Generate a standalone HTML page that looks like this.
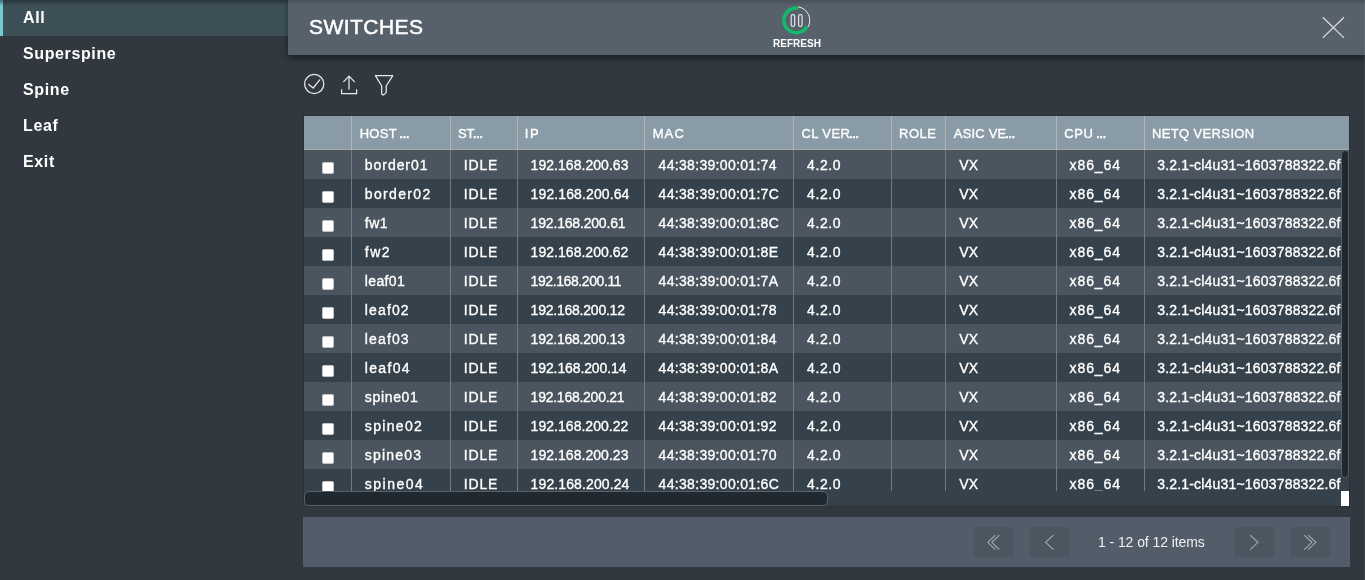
<!DOCTYPE html>
<html><head><meta charset="utf-8"><title>Switches</title>
<style>
*{box-sizing:border-box;margin:0;padding:0}
html,body{width:1365px;height:580px;overflow:hidden;background:#31383f;font-family:"Liberation Sans",sans-serif;color:#fff}
#side{position:absolute;left:0;top:0;width:288px;height:580px;background:#31383f}
#side .it{position:absolute;left:0;width:288px;height:36px;font-weight:bold;font-size:16px;line-height:35px;letter-spacing:.62px;padding-left:23px;white-space:nowrap}
#side .act{background:#3d5058;border-left:3px solid #72ccd3;padding-left:20px}
#topsh{position:absolute;left:0;top:0;width:288px;height:6px;background:linear-gradient(to bottom,rgba(20,26,32,.5),rgba(20,26,32,0));z-index:9}
#topsh2{position:absolute;left:288px;top:0;width:1077px;height:5px;background:linear-gradient(to bottom,rgba(20,26,32,.22),rgba(20,26,32,0));z-index:9}
#bar{position:absolute;left:288px;top:0;width:1077px;height:55px;background:#57616b;box-shadow:0 3px 6px rgba(0,0,0,.45)}
#barsh{display:none}
#redge{position:absolute;left:1364px;top:0;width:1px;height:580px;background:rgba(255,255,255,.06)}
#title{position:absolute;left:21px;top:15.2px;font-size:21px;line-height:24px;letter-spacing:.45px;white-space:nowrap}
#rf{position:absolute;left:0;top:0}
#rft{position:absolute;left:474px;top:37.5px;width:70px;text-align:center;font-size:10px;line-height:12px;letter-spacing:.05px;font-weight:bold;white-space:nowrap}
svg{position:absolute;overflow:visible}
#tbl{position:absolute;left:304px;top:116px;width:1045px;height:390px;background:#35424b;overflow:hidden;box-shadow:0 0 0 1px #2b3035}
#hd{position:absolute;left:0;top:0;width:1045px;height:34px;background:#899ba7;border-bottom:1px solid #a9abab}
.hc{position:absolute;top:0;height:34px;font-size:13px;line-height:35px;padding-left:7px;white-space:nowrap;border-left:1px solid #b5b2b0}
.r{position:absolute;left:0;width:1045px;height:29px}
.r.o{background:#4a555f}.r.e{background:#35424b}
.c{position:absolute;top:0;height:29px;font-size:14px;line-height:30px;padding-left:12.5px;white-space:nowrap;border-left:1px solid #717b82;overflow:hidden}
.el{font-size:14px;letter-spacing:-.6px;margin-left:-1.5px;-webkit-text-stroke:.6px #fff}
.h1{letter-spacing:0.308px;padding-left:7.64px}.h2{letter-spacing:-0.279px;padding-left:7.11px}.h3{letter-spacing:1.516px;padding-left:6.81px}.h4{letter-spacing:1.125px;padding-left:7.64px}.h5{letter-spacing:0.382px;padding-left:7.45px}.h6{letter-spacing:0.515px;padding-left:7.06px}.h7{letter-spacing:0.188px;padding-left:7.84px}.h8{letter-spacing:0.548px;padding-left:7.26px}.h9{letter-spacing:0.374px;padding-left:6.90px}.k1{letter-spacing:0.980px;padding-left:12.85px}.k2{letter-spacing:0.818px;padding-left:12.87px}.k3{letter-spacing:-0.022px;padding-left:12.62px}.k4{letter-spacing:0.313px;padding-left:13.61px}.k5{letter-spacing:0.595px;padding-left:13.02px}.k7{letter-spacing:0.113px;padding-left:13.30px}.k8{letter-spacing:0.896px;padding-left:12.60px}.k9{letter-spacing:0.185px;padding-left:12.20px}
#tbl,#side,#bar,#ft{will-change:transform}
.hc,.c{-webkit-text-stroke:.35px #fff}#title{-webkit-text-stroke:.5px #fff}
.cb{position:absolute;left:18px;top:12px;width:11.6px;height:11.6px;background:#fff;border-radius:1.8px;border:1px solid #c4c4c4}
#bd{position:absolute;left:0;top:34px;width:1045px;height:341px;overflow:hidden}
#vs{position:absolute;left:1037px;top:34px;width:8px;height:341px}
#vt{position:absolute;left:0;top:.3px;width:8px;height:328px;background:#212930;border:1px solid #56616a;border-radius:4px}
#hs{position:absolute;left:0;top:375px;width:1037px;height:15px}
#ht{position:absolute;left:0;top:.2px;width:523.5px;height:14.5px;background:#212930;border:1px solid #59626a;border-radius:5px}
#cn{position:absolute;left:1037px;top:375px;width:8px;height:15px;background:#fff}
#ft{position:absolute;left:303px;top:517px;width:1047px;height:50px;background:#525d69}
.pb{position:absolute;top:10px;width:40px;height:30px;background:#4c5661;border-radius:3px}
#pt{position:absolute;left:795px;top:10px;font-size:14px;line-height:30px;letter-spacing:-.08px;white-space:nowrap;color:#f0f0f0}
</style></head><body>
<div id="side">
<div class="it act" style="top:0">All</div>
<div class="it" style="top:36px">Superspine</div>
<div class="it" style="top:72px">Spine</div>
<div class="it" style="top:108px">Leaf</div>
<div class="it" style="top:144px">Exit</div>
</div>
<div id="bar">
<div id="title">SWITCHES</div>
<svg id="rf" width="1077" height="55" viewBox="288 0 1077 55">
<path d="M807.04 26.50 A12.4 12.4 0 1 1 798.03 8.02" fill="none" stroke="#14b86b" stroke-width="3.5"/>
<path d="M798.18 6.93 A13.5 13.5 0 0 1 807.99 27.05" fill="none" stroke="#ececec" stroke-width="1"/>
<g fill="none" stroke="#e4e4e4" stroke-width="1.2">
<rect x="791.2" y="14.6" width="3.5" height="11.9" rx="1.75"/>
<rect x="798.6" y="14.6" width="3.5" height="11.9" rx="1.75"/>
</g>
<g fill="none" stroke="#dedede" stroke-width="1.25" stroke-linecap="butt">
<path d="M1322.8 17.3 L1344 37.9 M1344 17.3 L1322.8 37.9"/>
</g>
</svg>
<div id="rft">REFRESH</div>
</div>
<div id="barsh"></div><div id="redge"></div>
<svg id="tools" style="left:0;top:0" width="1365" height="110" viewBox="0 0 1365 110">
<g fill="none" stroke="#e9e9e9" stroke-width="1.25" stroke-linejoin="round" stroke-linecap="round">
<circle cx="314.2" cy="84" r="9.6"/>
<path d="M308.7 84.4 L313.2 88 L319.7 79.8"/>
<path d="M349 76.1 V89.1 M343.7 81.6 L349 76.1 L354.4 81.6"/>
<path d="M341.6 89.3 V93.5 H356.6 V89.3" stroke-linejoin="miter" stroke-linecap="butt"/>
<path d="M375.4 75.6 H392.8 L386.2 86 V92.6 L383.9 94.6 Q381.7 95.2 381.7 93.6 V86 Z"/>
</g>
</svg>
<div id="tbl">
<div id="hd">
<div class="hc " style="left:0px;width:47px;border-left:none;"></div>
<div class="hc h1" style="left:47px;width:99px;">HOST <span class="el">...</span></div>
<div class="hc h2" style="left:146px;width:67px;">ST<span class="el">...</span></div>
<div class="hc h3" style="left:213px;width:127px;">IP</div>
<div class="hc h4" style="left:340px;width:149px;">MAC</div>
<div class="hc h5" style="left:489px;width:98px;">CL VER<span class="el">...</span></div>
<div class="hc h6" style="left:587px;width:54px;">ROLE</div>
<div class="hc h7" style="left:641px;width:111px;">ASIC VE<span class="el">...</span></div>
<div class="hc h8" style="left:752px;width:88px;">CPU <span class="el">...</span></div>
<div class="hc h9" style="left:840px;width:205px;">NETQ VERSION</div>
</div><div id="bd">
<div class="r o" style="top:0px">
<div class="c" style="left:0;width:47px;border-left:none;padding:0"><div class="cb"></div></div>
<div class="c k1" style="left:47px;width:99px;letter-spacing:0.941px">border01</div>
<div class="c k2" style="left:146px;width:67px">IDLE</div>
<div class="c k3" style="left:213px;width:127px;letter-spacing:0.038px">192.168.200.63</div>
<div class="c k4" style="left:340px;width:149px">44:38:39:00:01:74</div>
<div class="c k5" style="left:489px;width:98px">4.2.0</div>
<div class="c k6" style="left:587px;width:54px"></div>
<div class="c k7" style="left:641px;width:111px">VX</div>
<div class="c k8" style="left:752px;width:88px">x86_64</div>
<div class="c k9" style="left:840px;width:205px">3.2.1-cl4u31~1603788322.6f</div>
</div>
<div class="r e" style="top:29px">
<div class="c" style="left:0;width:47px;border-left:none;padding:0"><div class="cb"></div></div>
<div class="c k1" style="left:47px;width:99px;letter-spacing:1.330px">border02</div>
<div class="c k2" style="left:146px;width:67px">IDLE</div>
<div class="c k3" style="left:213px;width:127px;letter-spacing:0.113px">192.168.200.64</div>
<div class="c k4" style="left:340px;width:149px">44:38:39:00:01:7C</div>
<div class="c k5" style="left:489px;width:98px">4.2.0</div>
<div class="c k6" style="left:587px;width:54px"></div>
<div class="c k7" style="left:641px;width:111px">VX</div>
<div class="c k8" style="left:752px;width:88px">x86_64</div>
<div class="c k9" style="left:840px;width:205px">3.2.1-cl4u31~1603788322.6f</div>
</div>
<div class="r o" style="top:58px">
<div class="c" style="left:0;width:47px;border-left:none;padding:0"><div class="cb"></div></div>
<div class="c k1" style="left:47px;width:99px;letter-spacing:0.399px">fw1</div>
<div class="c k2" style="left:146px;width:67px">IDLE</div>
<div class="c k3" style="left:213px;width:127px;letter-spacing:-0.183px">192.168.200.61</div>
<div class="c k4" style="left:340px;width:149px">44:38:39:00:01:8C</div>
<div class="c k5" style="left:489px;width:98px">4.2.0</div>
<div class="c k6" style="left:587px;width:54px"></div>
<div class="c k7" style="left:641px;width:111px">VX</div>
<div class="c k8" style="left:752px;width:88px">x86_64</div>
<div class="c k9" style="left:840px;width:205px">3.2.1-cl4u31~1603788322.6f</div>
</div>
<div class="r e" style="top:87px">
<div class="c" style="left:0;width:47px;border-left:none;padding:0"><div class="cb"></div></div>
<div class="c k1" style="left:47px;width:99px;letter-spacing:1.500px">fw2</div>
<div class="c k2" style="left:146px;width:67px">IDLE</div>
<div class="c k3" style="left:213px;width:127px;letter-spacing:0.033px">192.168.200.62</div>
<div class="c k4" style="left:340px;width:149px">44:38:39:00:01:8E</div>
<div class="c k5" style="left:489px;width:98px">4.2.0</div>
<div class="c k6" style="left:587px;width:54px"></div>
<div class="c k7" style="left:641px;width:111px">VX</div>
<div class="c k8" style="left:752px;width:88px">x86_64</div>
<div class="c k9" style="left:840px;width:205px">3.2.1-cl4u31~1603788322.6f</div>
</div>
<div class="r o" style="top:116px">
<div class="c" style="left:0;width:47px;border-left:none;padding:0"><div class="cb"></div></div>
<div class="c k1" style="left:47px;width:99px;letter-spacing:0.364px">leaf01</div>
<div class="c k2" style="left:146px;width:67px">IDLE</div>
<div class="c k3" style="left:213px;width:127px;letter-spacing:-0.407px">192.168.200.11</div>
<div class="c k4" style="left:340px;width:149px">44:38:39:00:01:7A</div>
<div class="c k5" style="left:489px;width:98px">4.2.0</div>
<div class="c k6" style="left:587px;width:54px"></div>
<div class="c k7" style="left:641px;width:111px">VX</div>
<div class="c k8" style="left:752px;width:88px">x86_64</div>
<div class="c k9" style="left:840px;width:205px">3.2.1-cl4u31~1603788322.6f</div>
</div>
<div class="r e" style="top:145px">
<div class="c" style="left:0;width:47px;border-left:none;padding:0"><div class="cb"></div></div>
<div class="c k1" style="left:47px;width:99px;letter-spacing:1.119px">leaf02</div>
<div class="c k2" style="left:146px;width:67px">IDLE</div>
<div class="c k3" style="left:213px;width:127px;letter-spacing:-0.228px">192.168.200.12</div>
<div class="c k4" style="left:340px;width:149px">44:38:39:00:01:78</div>
<div class="c k5" style="left:489px;width:98px">4.2.0</div>
<div class="c k6" style="left:587px;width:54px"></div>
<div class="c k7" style="left:641px;width:111px">VX</div>
<div class="c k8" style="left:752px;width:88px">x86_64</div>
<div class="c k9" style="left:840px;width:205px">3.2.1-cl4u31~1603788322.6f</div>
</div>
<div class="r o" style="top:174px">
<div class="c" style="left:0;width:47px;border-left:none;padding:0"><div class="cb"></div></div>
<div class="c k1" style="left:47px;width:99px;letter-spacing:1.129px">leaf03</div>
<div class="c k2" style="left:146px;width:67px">IDLE</div>
<div class="c k3" style="left:213px;width:127px;letter-spacing:-0.228px">192.168.200.13</div>
<div class="c k4" style="left:340px;width:149px">44:38:39:00:01:84</div>
<div class="c k5" style="left:489px;width:98px">4.2.0</div>
<div class="c k6" style="left:587px;width:54px"></div>
<div class="c k7" style="left:641px;width:111px">VX</div>
<div class="c k8" style="left:752px;width:88px">x86_64</div>
<div class="c k9" style="left:840px;width:205px">3.2.1-cl4u31~1603788322.6f</div>
</div>
<div class="r e" style="top:203px">
<div class="c" style="left:0;width:47px;border-left:none;padding:0"><div class="cb"></div></div>
<div class="c k1" style="left:47px;width:99px;letter-spacing:1.312px">leaf04</div>
<div class="c k2" style="left:146px;width:67px">IDLE</div>
<div class="c k3" style="left:213px;width:127px;letter-spacing:-0.116px">192.168.200.14</div>
<div class="c k4" style="left:340px;width:149px">44:38:39:00:01:8A</div>
<div class="c k5" style="left:489px;width:98px">4.2.0</div>
<div class="c k6" style="left:587px;width:54px"></div>
<div class="c k7" style="left:641px;width:111px">VX</div>
<div class="c k8" style="left:752px;width:88px">x86_64</div>
<div class="c k9" style="left:840px;width:205px">3.2.1-cl4u31~1603788322.6f</div>
</div>
<div class="r o" style="top:232px">
<div class="c" style="left:0;width:47px;border-left:none;padding:0"><div class="cb"></div></div>
<div class="c k1" style="left:47px;width:99px;letter-spacing:0.656px">spine01</div>
<div class="c k2" style="left:146px;width:67px">IDLE</div>
<div class="c k3" style="left:213px;width:127px;letter-spacing:-0.252px">192.168.200.21</div>
<div class="c k4" style="left:340px;width:149px">44:38:39:00:01:82</div>
<div class="c k5" style="left:489px;width:98px">4.2.0</div>
<div class="c k6" style="left:587px;width:54px"></div>
<div class="c k7" style="left:641px;width:111px">VX</div>
<div class="c k8" style="left:752px;width:88px">x86_64</div>
<div class="c k9" style="left:840px;width:205px">3.2.1-cl4u31~1603788322.6f</div>
</div>
<div class="r e" style="top:261px">
<div class="c" style="left:0;width:47px;border-left:none;padding:0"><div class="cb"></div></div>
<div class="c k1" style="left:47px;width:99px;letter-spacing:1.313px">spine02</div>
<div class="c k2" style="left:146px;width:67px">IDLE</div>
<div class="c k3" style="left:213px;width:127px;letter-spacing:0.033px">192.168.200.22</div>
<div class="c k4" style="left:340px;width:149px">44:38:39:00:01:92</div>
<div class="c k5" style="left:489px;width:98px">4.2.0</div>
<div class="c k6" style="left:587px;width:54px"></div>
<div class="c k7" style="left:641px;width:111px">VX</div>
<div class="c k8" style="left:752px;width:88px">x86_64</div>
<div class="c k9" style="left:840px;width:205px">3.2.1-cl4u31~1603788322.6f</div>
</div>
<div class="r o" style="top:290px">
<div class="c" style="left:0;width:47px;border-left:none;padding:0"><div class="cb"></div></div>
<div class="c k1" style="left:47px;width:99px;letter-spacing:1.176px">spine03</div>
<div class="c k2" style="left:146px;width:67px">IDLE</div>
<div class="c k3" style="left:213px;width:127px;letter-spacing:0.038px">192.168.200.23</div>
<div class="c k4" style="left:340px;width:149px">44:38:39:00:01:70</div>
<div class="c k5" style="left:489px;width:98px">4.2.0</div>
<div class="c k6" style="left:587px;width:54px"></div>
<div class="c k7" style="left:641px;width:111px">VX</div>
<div class="c k8" style="left:752px;width:88px">x86_64</div>
<div class="c k9" style="left:840px;width:205px">3.2.1-cl4u31~1603788322.6f</div>
</div>
<div class="r e" style="top:319px">
<div class="c" style="left:0;width:47px;border-left:none;padding:0"><div class="cb"></div></div>
<div class="c k1" style="left:47px;width:99px;letter-spacing:1.479px">spine04</div>
<div class="c k2" style="left:146px;width:67px">IDLE</div>
<div class="c k3" style="left:213px;width:127px;letter-spacing:0.113px">192.168.200.24</div>
<div class="c k4" style="left:340px;width:149px">44:38:39:00:01:6C</div>
<div class="c k5" style="left:489px;width:98px">4.2.0</div>
<div class="c k6" style="left:587px;width:54px"></div>
<div class="c k7" style="left:641px;width:111px">VX</div>
<div class="c k8" style="left:752px;width:88px">x86_64</div>
<div class="c k9" style="left:840px;width:205px">3.2.1-cl4u31~1603788322.6f</div>
</div>
</div><div id="vs"><div id="vt"></div></div>
<div id="hs"><div id="ht"></div></div>
<div id="cn"></div>
</div>
<div id="ft">
<div class="pb" style="left:671px"></div>
<div class="pb" style="left:727px"></div>
<div id="pt">1 - 12 of 12 items</div>
<div class="pb" style="left:931px"></div>
<div class="pb" style="left:987px"></div>
<svg style="left:0;top:0" width="1047" height="50" viewBox="303 517 1047 50">
<g fill="none" stroke="#a2aab1" stroke-width="1.1">
<path d="M995.3 535.1 L987.9 542.3 L995.3 549.6 M999.2 535.1 L991.9 542.3 L999.2 549.6"/>
<path d="M1053.4 535.1 L1045.6 542.3 L1053.4 549.6"/>
<path d="M1250.2 535.1 L1258 542.3 L1250.2 549.6"/>
<path d="M1304.3 535.1 L1311.9 542.3 L1304.3 549.6 M1308.2 535.1 L1315.9 542.3 L1308.2 549.6"/>
</g>
</svg>
</div>
<div id="topsh"></div><div id="topsh2"></div>
</body></html>
